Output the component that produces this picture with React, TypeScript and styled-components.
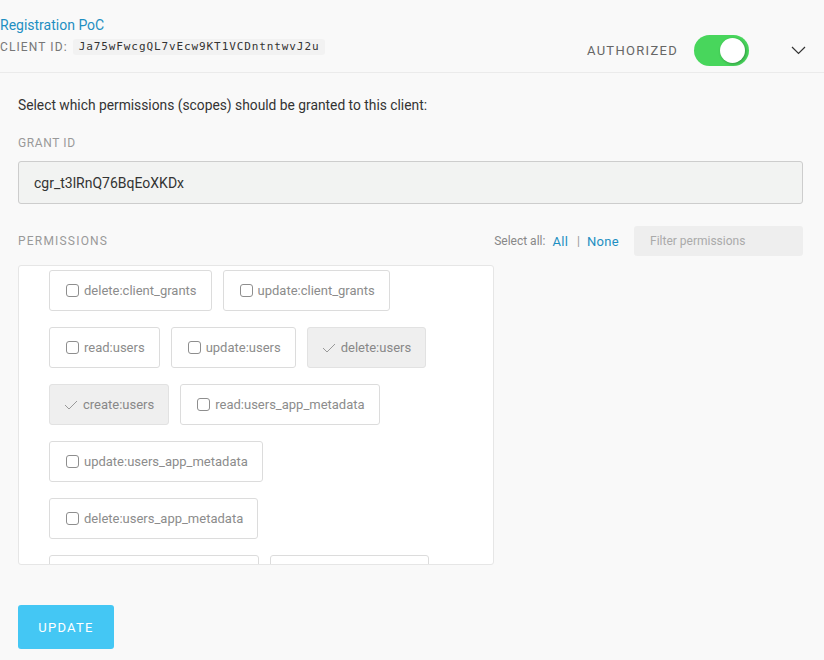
import React, { useState } from 'react';
import styled, { createGlobalStyle } from 'styled-components';

const GlobalStyle = createGlobalStyle`
  html, body {
    margin: 0;
    padding: 0;
    background: #f9f9f9;
    font-family: Roboto, 'Liberation Sans', sans-serif;
    color: #333;
  }
`;

// Header
const Header = styled.header`
  display: flex;
  justify-content: space-between;
  align-items: flex-end;
  height: 73px;
  box-sizing: border-box;
  padding: 0 18px 6px 0;
  border-bottom: 1px solid #ebebeb;
`;

const HeaderLeft = styled.div`
  display: flex;
  flex-direction: column;
  padding-bottom: 11px;
`;

const AppName = styled.a`
  font-size: 14px;
  color: #1e8fc2;
  text-decoration: none;
  line-height: 20px;
  margin-bottom: 4px;
`;

const ClientRow = styled.div`
  display: flex;
  align-items: center;
  gap: 5px;
`;

const SmallLabel = styled.span`
  font-size: 12px;
  letter-spacing: 1.1px;
  color: #777;
`;

const Code = styled.code`
  font-family: 'DejaVu Sans Mono', monospace;
  font-size: 11px;
  letter-spacing: 0.9px;
  color: #333;
  background: #f2f2f2;
  border-radius: 3px;
  padding: 2px 6px;
  line-height: 12px;
`;

const HeaderRight = styled.div`
  display: flex;
  align-items: center;
`;

const Status = styled.span`
  font-size: 13px;
  letter-spacing: 1.3px;
  color: #666;
  margin-right: 16px;
`;

const Toggle = styled.button<{ on: boolean }>`
  position: relative;
  width: 55px;
  height: 31px;
  border: none;
  border-radius: 16px;
  background: ${(p) => (p.on ? '#48d65c' : '#ccc')};
  padding: 0;
  cursor: pointer;
  &::after {
    content: '';
    position: absolute;
    top: 3px;
    left: ${(p) => (p.on ? '26px' : '3px')};
    width: 25px;
    height: 25px;
    border-radius: 50%;
    background: #fff;
    box-shadow: 1px 1px 3px rgba(0, 0, 0, 0.3);
  }
`;

const Chevron = styled.svg`
  margin-left: 42px;
  width: 15px;
  height: 9px;
`;

// Body
const Body = styled.main`
  padding: 23px 21px 0 18px;
`;

const Intro = styled.p`
  margin: 0;
  font-size: 13.8px;
  line-height: 18px;
  color: #333;
`;

const FieldLabel = styled.div`
  font-size: 12px;
  letter-spacing: 0.6px;
  color: #999;
  text-transform: uppercase;
`;

const GrantLabel = styled(FieldLabel)`
  margin-top: 21px;
  line-height: 16px;
`;

const GrantInput = styled.input`
  display: block;
  width: 100%;
  box-sizing: border-box;
  margin-top: 10px;
  height: 43px;
  padding: 0 15px;
  font-family: Roboto, 'Liberation Sans', sans-serif;
  font-size: 14px;
  color: #333;
  background: #f2f3f2;
  border: 1px solid #cdcdcd;
  border-radius: 3px;
  outline: none;
`;

const PermHeader = styled.div`
  display: flex;
  justify-content: space-between;
  align-items: center;
  margin-top: 22px;
  height: 30px;
`;

const PermLabel = styled(FieldLabel)`
  letter-spacing: 1.2px;
`;

const SelectAll = styled.div`
  display: flex;
  align-items: center;
  font-size: 12px;
  color: #888;
`;

const LinkBtn = styled.a`
  color: #1e8fc2;
  font-size: 13px;
  margin-left: 7px;
  letter-spacing: 0.3px;
  cursor: pointer;
`;

const Pipe = styled.span`
  margin-left: 9px;
  color: #999;
`;

const Filter = styled.input`
  margin-left: 15px;
  width: 169px;
  height: 30px;
  box-sizing: border-box;
  border: none;
  border-radius: 3px;
  background: #eeeeee;
  padding: 0 16px;
  font-family: Roboto, 'Liberation Sans', sans-serif;
  font-size: 12px;
  color: #333;
  outline: none;
  &::placeholder {
    color: #aaa;
  }
`;

const ListBox = styled.div`
  margin-top: 9px;
  width: 476px;
  height: 300px;
  box-sizing: border-box;
  background: #fff;
  border: 1px solid #e6e6e6;
  border-radius: 3px;
  overflow: hidden;
`;

const ChipWrap = styled.div`
  display: flex;
  flex-wrap: wrap;
  align-content: flex-start;
  column-gap: 11px;
  row-gap: 16px;
  padding: 4px 50px 0 30px;
`;

const Chip = styled.label<{ checked: boolean }>`
  display: flex;
  align-items: center;
  height: 41px;
  box-sizing: border-box;
  padding: 0 14px 0 ${(p) => (p.checked ? '14px' : '16px')};
  border: 1px solid ${(p) => (p.checked ? '#e2e2e2' : '#dcdcdc')};
  border-radius: 3px;
  background: ${(p) => (p.checked ? '#efefef' : '#fff')};
  font-size: 13px;
  color: ${(p) => (p.checked ? '#888' : '#8c8c8c')};
  cursor: pointer;
  white-space: nowrap;
`;

const Box = styled.span`
  width: 11px;
  height: 11px;
  border: 1px solid #8e8e8e;
  border-radius: 3px;
  margin-right: 5px;
  background: #fff;
`;

const Tick = styled.svg`
  width: 14px;
  height: 10px;
  margin-right: 5px;
`;

const UpdateButton = styled.button`
  margin-top: 40px;
  width: 96px;
  height: 44px;
  border: none;
  border-radius: 3px;
  background: #44c7f4;
  color: #fff;
  font-family: Roboto, 'Liberation Sans', sans-serif;
  font-size: 13px;
  letter-spacing: 1.3px;
  cursor: pointer;
`;

const scopes = [
  'delete:client_grants',
  'update:client_grants',
  'read:users',
  'update:users',
  'delete:users',
  'create:users',
  'read:users_app_metadata',
  'update:users_app_metadata',
  'delete:users_app_metadata',
  'create:users_app_metadata',
  'create:user_tickets',
  'read:rules',
  'create:rules',
];

const App: React.FC = () => {
  const [authorized, setAuthorized] = useState(true);
  const [checked, setChecked] = useState<string[]>(['delete:users', 'create:users']);

  const toggle = (s: string) =>
    setChecked((c) => (c.includes(s) ? c.filter((x) => x !== s) : [...c, s]));

  return (
    <>
      <GlobalStyle />
      <Header>
        <HeaderLeft>
          <AppName>Registration PoC</AppName>
          <ClientRow>
            <SmallLabel>CLIENT ID:</SmallLabel>
            <Code>Ja75wFwcgQL7vEcw9KT1VCDntntwvJ2u</Code>
          </ClientRow>
        </HeaderLeft>
        <HeaderRight>
          <Status>AUTHORIZED</Status>
          <Toggle on={authorized} onClick={() => setAuthorized(!authorized)} />
          <Chevron viewBox="0 0 15 9">
            <path d="M1 1l6.5 6.5L14 1" fill="none" stroke="#333" strokeWidth="1.2" />
          </Chevron>
        </HeaderRight>
      </Header>
      <Body>
        <Intro>Select which permissions (scopes) should be granted to this client:</Intro>
        <GrantLabel>Grant ID</GrantLabel>
        <GrantInput readOnly value="cgr_t3lRnQ76BqEoXKDx" />
        <PermHeader>
          <PermLabel>Permissions</PermLabel>
          <SelectAll>
            Select all:
            <LinkBtn onClick={() => setChecked(scopes)}>All</LinkBtn>
            <Pipe>|</Pipe>
            <LinkBtn onClick={() => setChecked([])}>None</LinkBtn>
            <Filter placeholder="Filter permissions" />
          </SelectAll>
        </PermHeader>
        <ListBox>
          <ChipWrap>
            {scopes.map((s) => {
              const on = checked.includes(s);
              return (
                <Chip key={s} checked={on} onClick={() => toggle(s)}>
                  {on ? (
                    <Tick viewBox="0 0 14 10">
                      <path d="M1 5l4 4 8-8" fill="none" stroke="#999" strokeWidth="1" />
                    </Tick>
                  ) : (
                    <Box />
                  )}
                  {s}
                </Chip>
              );
            })}
          </ChipWrap>
        </ListBox>
        <UpdateButton>UPDATE</UpdateButton>
      </Body>
    </>
  );
};

export default App;
